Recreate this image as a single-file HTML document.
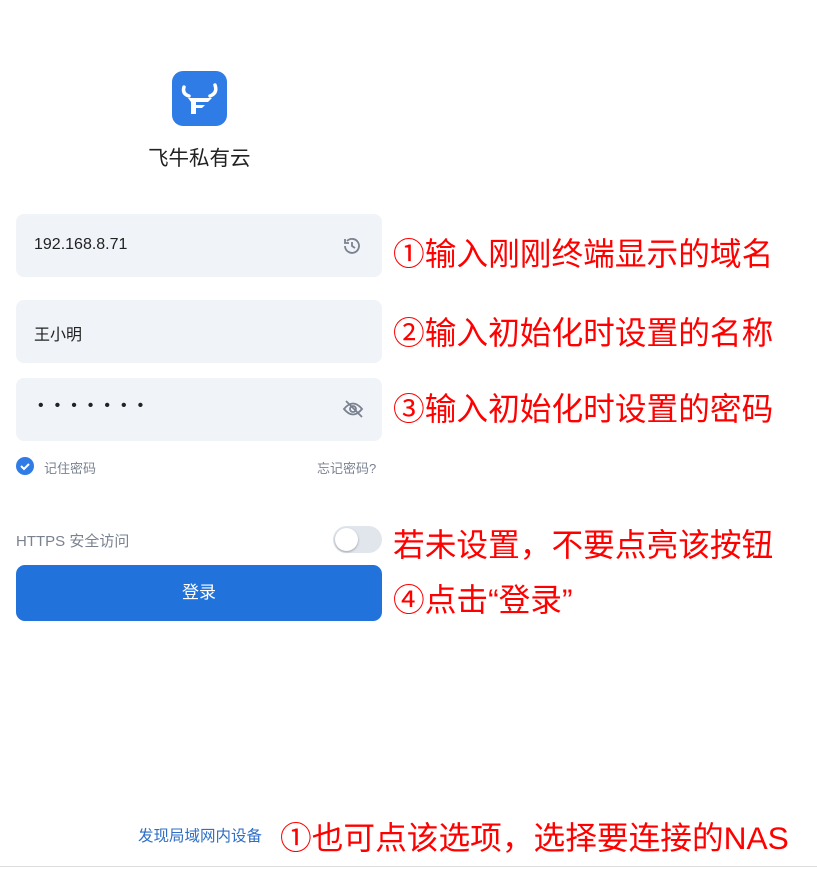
<!DOCTYPE html><html><head><meta charset="utf-8"><style>
body{margin:0;width:817px;height:869px;background:#fff;position:relative;overflow:hidden;font-family:"Liberation Sans","Noto Sans CJK SC",sans-serif}
.a{position:absolute}
.in{position:absolute;left:16px;width:366px;height:63px;background:#f0f3f8;border-radius:8px}
.r{position:absolute;color:#f00;font-size:31.7px;white-space:nowrap;left:393px}
</style></head><body>
<div class="a" style="left:172px;top:71px;width:55px;height:55px;background:#2f7ce6;border-radius:11px">
<svg width="55" height="55" viewBox="0 0 55 55"><path d="M12 16 q-2 7 5 9 M43 14 q3 8 -5 11" stroke="#fff" stroke-width="3.5" fill="none" stroke-linecap="round"/><path d="M16 27 H40 L36 31 H24 V43 H19 V31 Z M24 34 H33 L30 37 H24 Z" fill="#fff"/></svg></div>
<div class="a" style="left:148px;top:141px;font-size:20.5px;color:#222">飞牛私有云</div>
<div class="in" style="top:214px"></div>
<div class="a" style="left:34px;top:236px;font-size:16px;color:#222">192.168.8.71</div>
<svg class="a" style="left:342px;top:236px" width="20" height="20" viewBox="0 0 20 20"><path d="M3 10a7 7 0 1 0 2-5M3 3v4h4M10 6v4l3 2" stroke="#7a8290" stroke-width="1.8" fill="none"/></svg>
<div class="in" style="top:300px"></div>
<div class="a" style="left:34px;top:321px;font-size:16px;color:#222">王小明</div>
<div class="in" style="top:378px"></div>
<div class="a" style="left:38px;top:397px;font-size:16px;color:#222;letter-spacing:11px">•••••••</div>
<svg class="a" style="left:342px;top:399px" width="22" height="20" viewBox="0 0 22 20"><path d="M2 10q9-11 18 0q-9 11-18 0z" stroke="#7a8290" stroke-width="1.8" fill="none"/><circle cx="11" cy="10" r="3" stroke="#7a8290" stroke-width="1.8" fill="none"/><path d="M4 2l16 16" stroke="#7a8290" stroke-width="1.8"/></svg>
<div class="a" style="left:16px;top:457px;width:18px;height:18px;border-radius:50%;background:#2f7ce6"><svg width="18" height="18"><path d="M5 9l3 3 5-5" stroke="#fff" stroke-width="2" fill="none"/></svg></div>
<div class="a" style="left:44px;top:458px;font-size:13px;color:#7a8290">记住密码</div>
<div class="a" style="left:317px;top:458px;font-size:13px;color:#7a8290">忘记密码?</div>
<div class="a" style="left:16px;top:530px;font-size:15px;color:#7a8290">HTTPS 安全访问</div>
<div class="a" style="left:333px;top:526px;width:49px;height:27px;border-radius:14px;background:#e1e5ec"><div class="a" style="left:2px;top:2px;width:23px;height:23px;border-radius:50%;background:#fff;box-shadow:0 1px 2px rgba(0,0,0,.3)"></div></div>
<div class="a" style="left:16px;top:565px;width:366px;height:56px;background:#2272dc;border-radius:9px;color:#fff;font-size:17px;text-align:center;line-height:56px">登录</div>
<div class="a" style="left:138px;top:824px;font-size:15.5px;color:#2f6fc6">发现局域网内设备</div>
<div class="a" style="left:0;top:866px;width:817px;height:1px;background:#ddd"></div>
<div class="r" style="top:229px">①输入刚刚终端显示的域名</div>
<div class="r" style="top:308px">②输入初始化时设置的名称</div>
<div class="r" style="top:384px">③输入初始化时设置的密码</div>
<div class="r" style="top:520px">若未设置，不要点亮该按钮</div>
<div class="r" style="top:575px">④点击“登录”</div>
<div class="r" style="top:813px;left:280px">①也可点该选项，选择要连接的NAS</div>
</body></html>
